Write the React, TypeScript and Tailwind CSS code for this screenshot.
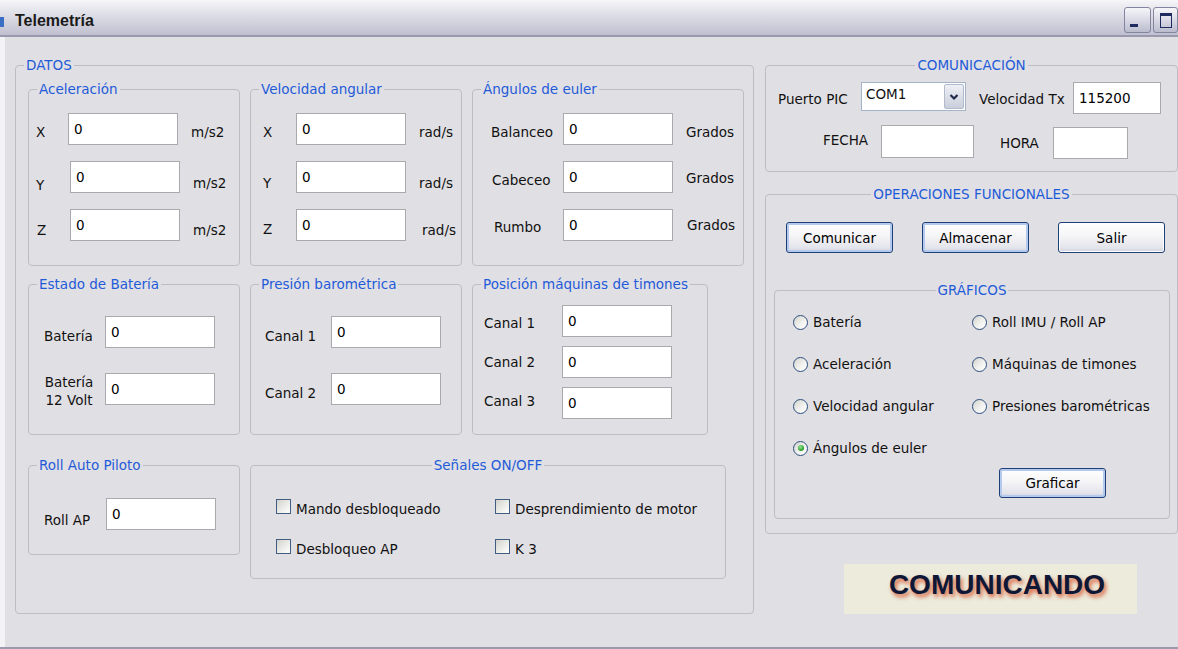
import type { ReactNode } from "react";
import { twMerge } from "tailwind-merge";

type GroupProps = {
  title: string;
  center?: boolean;
  className?: string;
  children?: ReactNode;
};

// XP style group box: fieldset with the blue caption sitting on the border
const Group = ({ title, center, className, children }: GroupProps) => (
  <fieldset className={twMerge("shrink-0 rounded-[4px] border border-[#bebdc3]", className)}>
    <legend
      className={twMerge(
        "px-[2px] leading-4 whitespace-nowrap text-[#1f5bd9]",
        center ? "mx-auto" : "ml-[8px]"
      )}
    >
      {title}
    </legend>
    {children}
  </fieldset>
);

const TextBox = ({ value = "", className }: { value?: string; className?: string }) => (
  <input
    readOnly
    value={value}
    className={twMerge(
      "h-[32px] w-[110px] shrink-0 border border-[#aaa9ae] bg-white px-[5px] text-black outline-none",
      className
    )}
  />
);

type RowProps = {
  label: ReactNode;
  unit?: string;
  className?: string;
  labelClass?: string;
  boxClass?: string;
  unitClass?: string;
};

const Row = ({ label, unit, className, labelClass, boxClass, unitClass }: RowProps) => (
  <div className={twMerge("flex items-start", className)}>
    <span className={twMerge("shrink-0 whitespace-nowrap", labelClass)}>{label}</span>
    <TextBox value="0" className={boxClass} />
    {unit && <span className={twMerge("whitespace-nowrap", unitClass)}>{unit}</span>}
  </div>
);

const XpButton = ({
  children,
  focused,
  className,
}: {
  children: ReactNode;
  focused?: boolean;
  className?: string;
}) => (
  <button
    type="button"
    className={twMerge(
      "flex h-[31px] w-[107px] shrink-0 items-center justify-center rounded-[3px] border border-[#1e3f77] bg-[linear-gradient(to_bottom,#ffffff_0%,#f5f5f7_45%,#e4e4ec_85%,#d2d2dc_100%)] text-black",
      focused ? "shadow-[inset_0_0_0_2px_#b3c9ee]" : "shadow-[inset_0_0_0_1px_#ffffff]",
      className
    )}
  >
    {children}
  </button>
);

const Radio = ({ label, checked }: { label: string; checked?: boolean }) => (
  <label className="flex items-center gap-[5px] whitespace-nowrap">
    <span className="flex h-[15px] w-[15px] shrink-0 items-center justify-center rounded-full border border-[#2d4f80] bg-[linear-gradient(135deg,#d3d3cd,#f3f3f1_60%,#ffffff)]">
      {checked && (
        <span className="h-[6px] w-[6px] rounded-full bg-[radial-gradient(circle_at_40%_35%,#9be59b,#1f9e1f_70%)]" />
      )}
    </span>
    {label}
  </label>
);

const Check = ({ label }: { label: string }) => (
  <label className="flex items-start gap-[5px] whitespace-nowrap">
    <span className="h-[15px] w-[15px] shrink-0 border border-[#415d82] bg-[linear-gradient(135deg,#d2d2cc,#f3f3f1_70%,#ffffff)]" />
    <span className="mt-[2px]">{label}</span>
  </label>
);

const Combo = ({ value }: { value: string }) => (
  <div className="flex h-[29px] w-[105px] shrink-0 border border-[#a5b3c8] bg-white">
    <span className="flex-1 pl-[4px] pt-[3px]">{value}</span>
    <span className="m-[1px] flex w-[20px] items-center justify-center rounded-[2px] border border-[#b2bacb] bg-[linear-gradient(to_bottom,#eef0f6,#c9cedb)]">
      <svg viewBox="0 0 10 8" className="h-[8px] w-[10px]">
        <path d="M1.5 2 L5 5.5 L8.5 2" fill="none" stroke="#1f2a4a" strokeWidth="2.2" />
      </svg>
    </span>
  </div>
);

export default function App() {
  return (
    <div className="flex h-[649px] w-[1178px] flex-col overflow-hidden border-b-2 border-[#9c9bad] bg-[#e0dfe3] font-['DejaVu_Sans',sans-serif] text-[13.5px] leading-4 text-[#111]">
      {/* title bar */}
      <div className="flex h-[37px] shrink-0 items-start border-b-2 border-[#9a9aae] bg-[linear-gradient(to_bottom,#f7f7f9_0%,#eeeef3_12%,#dcdce6_45%,#c0c0d0_100%)]">
        <span className="mt-[17px] h-[10px] w-[4px] bg-[#3a6fc4]" />
        <span className="ml-[11px] mt-[11px] font-['Liberation_Sans',sans-serif] text-[16px] leading-5 font-bold text-[#1a1a1a]">
          Telemetría
        </span>
        <div className="ml-auto mt-[7px] flex gap-[2px]">
          <span className="flex h-[26px] w-[27px] items-end rounded-[3px] border border-[#8385a0] bg-[linear-gradient(to_bottom,#f5f5f9,#d6d7e3_55%,#babccd)] pb-[5px] pl-[5px]">
            <span className="h-[3px] w-[8px] bg-[#1d2b5e]" />
          </span>
          <span className="flex h-[26px] w-[25px] items-center justify-center rounded-[3px] border border-[#8385a0] bg-[linear-gradient(to_bottom,#f5f5f9,#d6d7e3_55%,#babccd)]">
            <span className="h-[15px] w-[12px] border border-t-[3px] border-[#1d2b5e]" />
          </span>
        </div>
      </div>

      <div className="flex flex-1">
        <div className="w-[5px] shrink-0 bg-[#f3f3f5]" />

        <Group title="DATOS" className="ml-[10px] mt-[20px] h-[557px] w-[739px]">
          <div className="pl-[12px] pt-[8px]">
            <div className="flex gap-[10px]">
              <Group title="Aceleración" className="h-[185px] w-[212px]">
                <Row className="mt-4" label="X" unit="m/s2" labelClass="ml-[7px] mt-[11px] w-[32px]" unitClass="ml-[13px] mt-[11px]" />
                <Row className="mt-4" label="Y" unit="m/s2" labelClass="ml-[7px] mt-[16px] w-[34px]" unitClass="ml-[13px] mt-[14px]" />
                <Row className="mt-4" label="Z" unit="m/s2" labelClass="ml-[8px] mt-[13px] w-[33px]" unitClass="ml-[13px] mt-[13px]" />
              </Group>
              <Group title="Velocidad angular" className="h-[185px] w-[212px]">
                <Row className="mt-4" label="X" unit="rad/s" labelClass="ml-[12px] mt-[11px] w-[33px]" unitClass="ml-[13px] mt-[11px]" />
                <Row className="mt-4" label="Y" unit="rad/s" labelClass="ml-[12px] mt-[14px] w-[33px]" unitClass="ml-[13px] mt-[14px]" />
                <Row className="mt-4" label="Z" unit="rad/s" labelClass="ml-[12px] mt-[12px] w-[33px]" unitClass="ml-[16px] mt-[13px]" />
              </Group>
              <Group title="Ángulos de euler" className="h-[185px] w-[272px]">
                <Row className="mt-4" label="Balanceo" unit="Grados" labelClass="ml-[18px] mt-[11px] w-[72px]" unitClass="ml-[13px] mt-[11px]" />
                <Row className="mt-4" label="Cabeceo" unit="Grados" labelClass="ml-[19px] mt-[11px] w-[71px]" unitClass="ml-[13px] mt-[9px]" />
                <Row className="mt-4" label="Rumbo" unit="Grados" labelClass="ml-[21px] mt-[10px] w-[69px]" unitClass="ml-[14px] mt-[8px]" />
              </Group>
            </div>

            <div className="mt-[10px] flex gap-[10px]">
              <Group title="Estado de Batería" className="h-[159px] w-[212px]">
                <Row className="mt-6" label="Batería" labelClass="ml-[15px] mt-[12px] w-[61px]" />
                <Row
                  className="mt-[25px]"
                  label={
                    <>
                      Batería
                      <br />
                      12 Volt
                    </>
                  }
                  labelClass="ml-[15px] mr-[11px] w-[50px] text-center leading-[18px]"
                />
              </Group>
              <Group title="Presión barométrica" className="h-[159px] w-[212px]">
                <Row className="mt-6" label="Canal 1" labelClass="ml-[14px] mt-[12px] w-[66px]" />
                <Row className="mt-[25px]" label="Canal 2" labelClass="ml-[14px] mt-[12px] w-[66px]" />
              </Group>
              <Group title="Posición máquinas de timones" className="h-[159px] w-[236px]">
                <Row className="mt-[13px]" label="Canal 1" labelClass="ml-[11px] mt-[10px] w-[78px]" />
                <Row className="mt-[9px]" label="Canal 2" labelClass="ml-[11px] mt-[8px] w-[78px]" />
                <Row className="mt-[9px]" label="Canal 3" labelClass="ml-[11px] mt-[6px] w-[78px]" />
              </Group>
            </div>

            <div className="mt-[22px] flex items-start gap-[10px]">
              <Group title="Roll Auto Piloto" className="h-[98px] w-[212px]">
                <Row className="mt-[25px]" label="Roll AP" labelClass="ml-[15px] mt-[14px] w-[62px]" />
              </Group>
              <Group title="Señales ON/OFF" center className="h-[122px] w-[476px]">
                <div className="ml-[25px] mt-[26px] grid grid-cols-[219px_auto] gap-y-[22px]">
                  <Check label="Mando desbloqueado" />
                  <Check label="Desprendimiento de motor" />
                  <Check label="Desbloqueo AP" />
                  <Check label="K 3" />
                </div>
              </Group>
            </div>
          </div>
        </Group>

        <div className="ml-[11px] mt-[20px] w-[413px] shrink-0">
          <Group title="COMUNICACIÓN" center className="h-[115px] w-full">
            <div className="mt-[9px] flex items-start">
              <span className="ml-[12px] mt-[9px] w-[83px] shrink-0">Puerto PIC</span>
              <Combo value="COM1" />
              <span className="ml-[13px] mt-[9px] w-[94px] shrink-0 whitespace-nowrap">Velocidad Tx</span>
              <TextBox value="115200" className="w-[88px]" />
            </div>
            <div className="mt-[11px] flex items-start">
              <span className="ml-[57px] mt-[7px] w-[58px] shrink-0">FECHA</span>
              <TextBox className="h-[33px] w-[93px]" />
              <span className="ml-[26px] mt-[10px] w-[53px] shrink-0">HORA</span>
              <TextBox className="mt-[2px] w-[75px]" />
            </div>
          </Group>

          <Group title="OPERACIONES FUNCIONALES" center className="mt-[14px] h-[348px] w-full">
            <div className="mt-5 flex">
              <XpButton className="ml-[20px]" focused>
                Comunicar
              </XpButton>
              <XpButton className="ml-[29px]" focused>
                Almacenar
              </XpButton>
              <XpButton className="ml-[29px]">Salir</XpButton>
            </div>
            <Group title="GRÁFICOS" center className="ml-[8px] mt-[29px] h-[237px] w-[396px]">
              <div className="ml-[18px] mt-[16px] grid grid-cols-[179px_auto] gap-y-[26px]">
                <Radio label="Batería" />
                <Radio label="Roll IMU / Roll AP" />
                <Radio label="Aceleración" />
                <Radio label="Máquinas de timones" />
                <Radio label="Velocidad angular" />
                <Radio label="Presiones barométricas" />
                <Radio label="Ángulos de euler" checked />
              </div>
              <XpButton className="ml-[224px] mt-[12px] h-[30px]" focused>
                Graficar
              </XpButton>
            </Group>
          </Group>

          <div className="ml-[79px] mt-[30px] flex h-[50px] w-[293px] items-center justify-center bg-[#ecebdc] pb-[8px] pl-[13px]">
            <span className="font-['Liberation_Sans',sans-serif] text-[28px] leading-8 font-bold text-[#0f1736] [text-shadow:2px_3px_4px_#d8613c]">
              COMUNICANDO
            </span>
          </div>
        </div>
      </div>
    </div>
  );
}
